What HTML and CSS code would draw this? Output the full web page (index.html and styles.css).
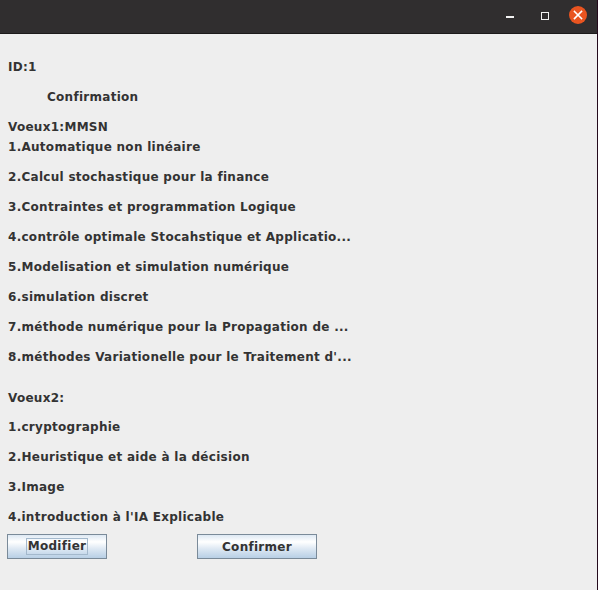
FILE: index.html
```html
<!DOCTYPE html>
<html>
<head>
<meta charset="utf-8">
<link rel="stylesheet" href="styles.css">
</head>
<body>
<div class="window">
  <div class="titlebar">
    <span class="ctl min"></span>
    <span class="ctl max"></span>
    <span class="ctl close">
      <svg width="18" height="18" viewBox="0 0 18 18"><path d="M5.5 5.5 L12.5 12.5 M12.5 5.5 L5.5 12.5" stroke="#fff" stroke-width="1.6" stroke-linecap="square"/></svg>
    </span>
  </div>
  <div class="content">
    <div class="line">ID:1</div>
    <div class="line gap indent">Confirmation</div>
    <div class="line gap">Voeux1:MMSN</div>
    <div class="line">1.Automatique non linéaire</div>
    <div class="line gap">2.Calcul stochastique pour la finance</div>
    <div class="line gap">3.Contraintes et programmation Logique</div>
    <div class="line gap">4.contrôle optimale Stocahstique et Applicatio...</div>
    <div class="line gap">5.Modelisation et simulation numérique</div>
    <div class="line gap">6.simulation discret</div>
    <div class="line gap">7.méthode numérique pour la Propagation de ...</div>
    <div class="line gap">8.méthodes Variationelle pour le Traitement d'...</div>
    <div class="line section">Voeux2:</div>
    <div class="line gap-s">1.cryptographie</div>
    <div class="line gap">2.Heuristique et aide à la décision</div>
    <div class="line gap">3.Image</div>
    <div class="line gap">4.introduction à l'IA Explicable</div>
    <div class="buttons">
      <button class="btn btn-modify"><span class="focus">Modifier</span></button>
      <button class="btn btn-confirm">Confirmer</button>
    </div>
  </div>
</div>
</body>
</html>
```

FILE: styles.css
```css
html, body {
  margin: 0;
  padding: 0;
  background: #eeeeee;
}

.window {
  width: 597px;
  height: 590px;
  border-right: 1px solid #240a1c;
  background: #eeeeee;
  overflow: hidden;
}

.titlebar {
  height: 33px;
  background: #302e2f;
  border-bottom: 1px solid #1c1b1b;
  display: flex;
  justify-content: flex-end;
  align-items: flex-start;
  padding-right: 10px;
}

.ctl {
  display: block;
}

.min {
  width: 8px;
  height: 2px;
  background: #f2f2f2;
  margin-top: 16px;
}

.max {
  width: 6px;
  height: 6px;
  border: 1px solid #f2f2f2;
  margin-top: 12px;
  margin-left: 27px;
}

.close {
  width: 18px;
  height: 18px;
  border-radius: 50%;
  background: #e95420;
  margin-top: 6px;
  margin-left: 20px;
}

.close svg {
  display: block;
}

.content {
  padding: 23px 0 0 8px;
  font-family: "DejaVu Sans", sans-serif;
  font-weight: bold;
  font-size: 12px;
  letter-spacing: 0.28px;
  color: #333333;
}

.line {
  height: 20px;
  line-height: 20px;
  white-space: nowrap;
}

.gap {
  margin-top: 10px;
}

.gap-s {
  margin-top: 9px;
}

.section {
  margin-top: 21px;
}

.indent {
  padding-left: 39px;
}

.buttons {
  display: flex;
  margin-top: 7px;
  margin-left: -1px;
  gap: 90px;
}

.btn {
  height: 25px;
  margin: 0;
  padding: 0;
  border: 1px solid #7a8a99;
  border-radius: 0;
  background: linear-gradient(#dde8f3 0%, #ffffff 30%, #dde8f3 60%, #b8cfe5 100%);
  font-family: "DejaVu Sans", sans-serif;
  font-weight: bold;
  font-size: 12px;
  letter-spacing: 0.28px;
  color: #333333;
  display: flex;
  align-items: center;
  justify-content: center;
}

.btn-modify {
  width: 100px;
}

.btn-confirm {
  width: 120px;
}

.focus {
  border: 1px solid #a3b8cc;
  padding: 0 1px;
  line-height: 15px;
}
```
